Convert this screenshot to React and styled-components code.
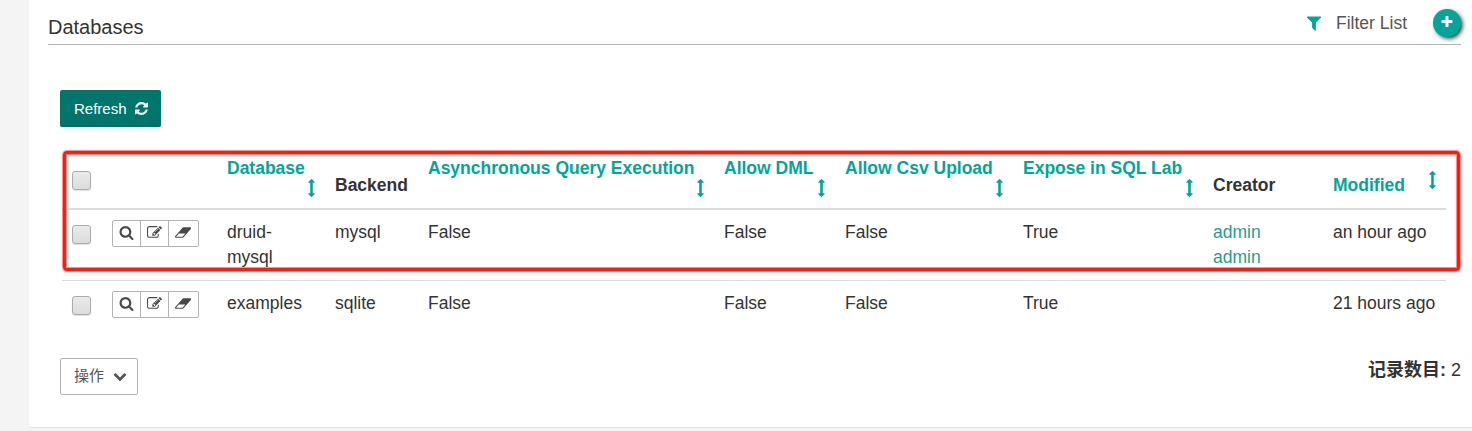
import React from "react";
import styled, { createGlobalStyle } from "styled-components";

const GlobalStyle = createGlobalStyle`
  * { box-sizing: border-box; }
  body {
    margin: 0;
    background: #f4f4f4;
    color: #333;
    font: 17.5px/25px "Liberation Sans", "Noto Sans CJK SC", sans-serif;
  }
`;

const ICONS = {
  refresh:
    "M1639 1056q0 5-1 7-64 268-268 434.500t-478 166.500q-146 0-282.500-55t-243.500-157l-129 129q-19 19-45 19t-45-19-19-45v-448q0-26 19-45t45-19h448q26 0 45 19t19 45-19 45l-137 137q71 66 161 102t187 36q134 0 250-65t186-179q11-17 53-117 8-23 30-23h192q13 0 22.500 9.500t9.500 22.500zm25-800v448q0 26-19 45t-45 19h-448q-26 0-45-19t-19-45 19-45l138-138q-148-137-349-137-134 0-250 65t-186 179q-11 17-53 117-8 23-30 23h-199q-13 0-22.500-9.500t-9.500-22.500v-7q65-268 270-434.500t480-166.500q146 0 284 55.500t245 156.500l130-129q19-19 45-19t45 19 19 45z",
  search:
    "M1216 832q0-185-131.500-316.500t-316.500-131.500-316.500 131.500-131.500 316.500 131.500 316.500 316.500 131.500 316.500-131.500 131.500-316.500zm512 832q0 52-38 90t-90 38q-54 0-90-38l-343-342q-179 124-399 124-143 0-273.500-55.500t-225-150-150-225-55.500-273.500 55.500-273.500 150-225 225-150 273.500-55.500 273.500 55.500 225 150 150 225 55.500 273.500q0 220-124 399l343 343q37 37 37 90z",
  edit:
    "M888 1184l116-116-152-152-116 116v56h96v96h56zm440-720q-16-16-33 1l-350 350q-17 17-1 33t33-1l350-350q17-17 1-33zm80 594v190q0 119-84.500 203.500t-203.500 84.500h-832q-119 0-203.500-84.500t-84.500-203.500v-832q0-119 84.500-203.500t203.500-84.500h832q63 0 117 25 15 7 18 23 3 17-9 29l-49 49q-14 14-32 8-23-6-45-6h-832q-66 0-113 47t-47 113v832q0 66 47 113t113 47h832q66 0 113-47t47-113v-126q0-13 9-22l64-64q15-15 35-7t20 29zm-96-738l288 288-672 672h-288v-288zm444 132l-92 92-288-288 92-92q28-28 68-28t68 28l152 152q28 28 28 68t-28 68z",
  eraser:
    "M832 1408l336-384h-768l-336 384h768zm1013-1077q15 34 9.500 71.500t-30.500 65.500l-896 1024q-38 44-96 44h-768q-38 0-69.500-20.500t-47.500-54.500q-15-34-9.500-71.500t30.500-65.500l896-1024q38-44 96-44h768q38 0 69.500 20.500t47.500 54.500z",
  filter:
    "M1595 295q17 41-14 70l-493 493v742q0 42-39 59-13 5-25 5-27 0-45-19l-256-256q-19-19-19-45v-486l-493-493q-31-29-14-70 17-39 59-39h1280q42 0 59 39z",
  plus:
    "M1600 736v192q0 40-28 68t-68 28h-416v416q0 40-28 68t-68 28h-192q-40 0-68-28t-28-68v-416h-416q-40 0-68-28t-28-68v-192q0-40 28-68t68-28h416v-416q0-40 28-68t68-28h192q40 0 68 28t28 68v416h416q40 0 68 28t28 68z",
  sort:
    "M1216 320q0 26-19 45t-45 19h-128v1024h128q26 0 45 19t19 45-19 45l-256 256q-19 19-45 19t-45-19l-256-256q-19-19-19-45t19-45 45-19h128v-1024h-128q-26 0-45-19t-19-45 19-45l256-256q19-19 45-19t45 19l256 256q19 19 19 45z",
  down:
    "M1683 808l-742 741q-19 19-45 19t-45-19l-742-741q-19-19-19-45.500t19-45.500l166-165q19-19 45-19t45 19l531 531 531-531q19-19 45-19t45 19l166 165q19 19 19 45.500t-19 45.500z",
};

const BOXES = { sort: "448 0 768 1792", eraser: "-64 0 1984 1792" };

const Svg = styled.svg`
  display: block;
  flex: none;
  height: ${(p) => p.$size}px;
  fill: currentColor;
  overflow: visible;
`;

const Icon = ({ name, size }) => (
  <Svg $size={size} viewBox={BOXES[name] || "0 0 1792 1792"} aria-hidden="true">
    <path d={ICONS[name]} />
  </Svg>
);

const Page = styled.div`
  height: 431px;
  padding-left: 29px;
  overflow: hidden;
`;

const Panel = styled.main`
  height: 428px;
  padding: 0 11px 0 19px;
  background: #fff;
  border-bottom: 1px solid #e4e4e4;
`;

const Header = styled.header`
  display: flex;
  justify-content: space-between;
  height: 45px;
  border-bottom: 1px solid #b3b3b3;
`;

const Title = styled.h1`
  margin: 14px 0 0;
  font-size: 20px;
  font-weight: 400;
  line-height: 26px;
`;

const Tools = styled.div`
  display: flex;
  align-items: flex-start;
  padding-top: 9px;
`;

const FilterLink = styled.a`
  display: flex;
  align-items: center;
  gap: 13px;
  height: 28px;
  margin-right: 26px;
  color: #555;
  svg { color: #00a699; }
`;

const AddButton = styled.button`
  display: flex;
  align-items: center;
  justify-content: center;
  width: 28px;
  height: 28px;
  padding: 0 0 3px;
  border: 0;
  border-radius: 50%;
  background: #00a699;
  color: #fff;
  box-shadow: 2px 2px 5px -1px #000;
`;

const Content = styled.section`
  padding: 45px 0 0 12px;
`;

const RefreshButton = styled.button`
  display: flex;
  align-items: center;
  gap: 7px;
  width: 101px;
  height: 37px;
  padding: 0 0 0 14px;
  border: 1px solid #006b63;
  border-width: 0 0 1px;
  border-radius: 2px;
  background: #00756b;
  color: #fff;
  font: 15px "Liberation Sans", sans-serif;
`;

const TableArea = styled.div`
  position: relative;
  margin: 18px 0 0 2px;
`;

const Highlight = styled.div`
  position: absolute;
  z-index: 1;
  top: 6px;
  left: 1px;
  width: 1397px;
  height: 120px;
  border: 3px solid #ff1a0e;
  border-radius: 4px;
  box-shadow: 0 0 0 1px rgba(255, 26, 14, 0.5), inset 0 0 0 1px rgba(255, 26, 14, 0.5);
  pointer-events: none;
`;

const Table = styled.table`
  width: 1384px;
  table-layout: fixed;
  border-collapse: separate;
  border-spacing: 0;
`;

const HeadCell = styled.th`
  height: 65px;
  padding: 0 10px ${(p) => (p.$select ? 18 : 10)}px;
  border-bottom: 2px solid #dcdcdc;
  text-align: left;
  vertical-align: bottom;
  color: ${(p) => (p.$sortable ? "#00a699" : "#333")};
  white-space: nowrap;
`;

const SortStack = styled.div`
  display: flex;
  flex-direction: ${(p) => (p.$inline ? "row" : "column")};
  justify-content: space-between;
  svg {
    align-self: ${(p) => (p.$inline ? "flex-start" : "flex-end")};
    margin: ${(p) => (p.$inline ? "-2px 0 0" : "-2px 0 1px")};
  }
`;

const Cell = styled.td`
  height: ${(p) => (p.$last ? 46 : 71)}px;
  padding: 10px 10px 0;
  border-bottom: ${(p) => (p.$last ? 0 : "1px solid #dcdcdc")};
  vertical-align: top;
  white-space: ${(p) => (p.$nowrap ? "nowrap" : "normal")};
`;

const Check = styled.span`
  display: block;
  width: 19px;
  height: 19px;
  margin-top: ${(p) => p.$top || 0}px;
  border: 1px solid #ababab;
  border-radius: 3px;
  background: linear-gradient(#eaeaea, #dcdcdc);
  box-shadow: 0 1px 1px rgba(0, 0, 0, 0.12);
`;

const ButtonGroup = styled.div`
  display: flex;
  width: 87px;
  height: 27px;
  border: 1px solid #b3b3b3;
  border-radius: 2px;
`;

const ActionButton = styled.button`
  display: flex;
  align-items: center;
  justify-content: center;
  flex: ${(p) => (p.$wide ? "1" : "0 0 28px")};
  padding: 0 0 2px;
  border: 0;
  border-right: ${(p) => (p.$wide ? 0 : "1px solid #b3b3b3")};
  background: transparent;
  color: #484848;
`;

const UserLink = styled.a`
  display: block;
  color: #1f9e8c;
`;

const Footer = styled.footer`
  display: flex;
  justify-content: space-between;
  margin-top: 31px;
`;

const MenuButton = styled.button`
  display: flex;
  align-items: center;
  gap: 9px;
  width: 78px;
  height: 37px;
  padding: 0 0 4px 13px;
  border: 1px solid #b3b3b3;
  border-radius: 2px;
  background: #fff;
  color: #555;
  font: 15px "Noto Sans CJK SC", sans-serif;
  svg { margin-top: 3px; }
`;

const Count = styled.div`
  font-size: 18px;
  strong { font-weight: 700; }
`;

const WIDTHS = [40, 115, 108, 93, 296, 121, 178, 190, 120, 123];

const COLUMNS = [
  ["Database", true],
  ["Backend", false],
  ["Asynchronous Query Execution", true],
  ["Allow DML", true],
  ["Allow Csv Upload", true],
  ["Expose in SQL Lab", true],
  ["Creator", false],
  ["Modified", true],
];

const ROWS = [
  { name: "druid-mysql", backend: "mysql", users: ["admin", "admin"], modified: "an hour ago" },
  { name: "examples", backend: "sqlite", users: [], modified: "21 hours ago" },
];

const Row = ({ row, last }) => (
  <tr>
    <Cell $last={last}><Check $top={5} /></Cell>
    <Cell $last={last}>
      <ButtonGroup>
        <ActionButton aria-label="Show"><Icon name="search" size={15} /></ActionButton>
        <ActionButton aria-label="Edit"><Icon name="edit" size={15} /></ActionButton>
        <ActionButton aria-label="Delete" $wide><Icon name="eraser" size={15} /></ActionButton>
      </ButtonGroup>
    </Cell>
    <Cell $last={last}>{row.name}</Cell>
    <Cell $last={last}>{row.backend}</Cell>
    <Cell $last={last}>False</Cell>
    <Cell $last={last}>False</Cell>
    <Cell $last={last}>False</Cell>
    <Cell $last={last}>True</Cell>
    <Cell $last={last}>{row.users.map((u, i) => <UserLink key={i}>{u}</UserLink>)}</Cell>
    <Cell $last={last} $nowrap>{row.modified}</Cell>
  </tr>
);

export default function App() {
  return (
    <Page>
      <GlobalStyle />
      <Panel>
        <Header>
          <Title>Databases</Title>
          <Tools>
            <FilterLink><Icon name="filter" size={18} />Filter List</FilterLink>
            <AddButton aria-label="Add"><Icon name="plus" size={14} /></AddButton>
          </Tools>
        </Header>
        <Content>
          <RefreshButton>Refresh<Icon name="refresh" size={15} /></RefreshButton>
          <TableArea>
            <Highlight />
            <Table>
              <colgroup>{WIDTHS.map((w, i) => <col key={i} width={w} />)}</colgroup>
              <thead>
                <tr>
                  <HeadCell $select><Check /></HeadCell>
                  <HeadCell />
                  {COLUMNS.map(([label, sortable]) => (
                    <HeadCell key={label} $sortable={sortable}>
                      {sortable ? (
                        <SortStack $inline={label === "Modified"}>
                          {label}<Icon name="sort" size={18} />
                        </SortStack>
                      ) : label}
                    </HeadCell>
                  ))}
                </tr>
              </thead>
              <tbody>
                {ROWS.map((row, i) => <Row key={row.name} row={row} last={i === 1} />)}
              </tbody>
            </Table>
          </TableArea>
          <Footer>
            <MenuButton>操作<Icon name="down" size={14} /></MenuButton>
            <Count><strong>记录数目:</strong> 2</Count>
          </Footer>
        </Content>
      </Panel>
    </Page>
  );
}
